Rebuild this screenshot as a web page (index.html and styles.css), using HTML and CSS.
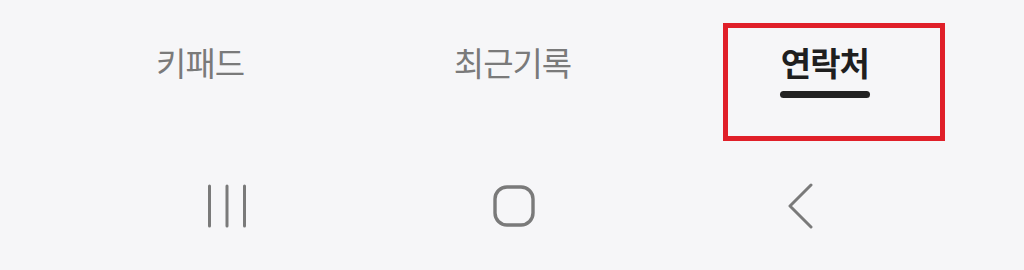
FILE: index.html
```html
<!DOCTYPE html>
<html lang="ko">
<head>
<meta charset="utf-8">
<link rel="stylesheet" href="styles.css">
</head>
<body>
<div class="screen">
  <nav class="tabs">
    <div class="tab"><span class="label">키패드</span></div>
    <div class="tab"><span class="label">최근기록</span></div>
    <div class="tab active"><span class="label">연락처</span><span class="indicator"></span><span class="highlight"></span></div>
  </nav>
  <div class="navbar">
    <div class="navbtn">
      <svg width="44" height="44" viewBox="0 0 44 44"><g stroke="#7a7a7a" stroke-width="3" stroke-linecap="round"><line x1="4.5" y1="2" x2="4.5" y2="42"/><line x1="22" y1="2" x2="22" y2="42"/><line x1="39.5" y1="2" x2="39.5" y2="42"/></g></svg>
    </div>
    <div class="navbtn">
      <svg width="42" height="42" viewBox="0 0 42 42"><rect x="2" y="2" width="38" height="38" rx="12" ry="12" fill="none" stroke="#7a7a7a" stroke-width="3.4"/></svg>
    </div>
    <div class="navbtn">
      <svg width="28" height="46" viewBox="0 0 28 46"><polyline points="24,2 3,23 24,44" fill="none" stroke="#7a7a7a" stroke-width="3" stroke-linecap="round" stroke-linejoin="round"/></svg>
    </div>
  </div>
</div>
</body>
</html>
```

FILE: styles.css
```css
html, body {
  margin: 0;
  padding: 0;
  background: #f6f6f8;
}
.screen {
  width: 1024px;
  height: 270px;
  font-family: "Noto Sans CJK KR", "Noto Sans", sans-serif;
  overflow: hidden;
}
.tabs {
  display: grid;
  grid-template-columns: repeat(3, 1fr);
  padding: 41px 43px 0 44px;
  height: 110px;
}
.tab {
  position: relative;
  display: flex;
  flex-direction: column;
  align-items: center;
}
.label {
  font-size: 33px;
  line-height: 42px;
  color: #7a7a7a;
  letter-spacing: -1px;
}
.tab.active .label {
  color: #1f1f1f;
  font-weight: 700;
}
.indicator {
  margin-top: 8px;
  width: 90px;
  height: 7px;
  border-radius: 4px;
  background: #222;
}
.highlight {
  position: absolute;
  left: 54px;
  top: -18px;
  width: 212px;
  height: 108px;
  border: 5px solid #e01f29;
}
.navbar {
  display: grid;
  grid-template-columns: repeat(3, 1fr);
  padding: 31px 80px 0 83px;
  align-items: center;
  justify-items: center;
}
.navbtn {
  display: flex;
  align-items: center;
  justify-content: center;
  height: 48px;
}
```
